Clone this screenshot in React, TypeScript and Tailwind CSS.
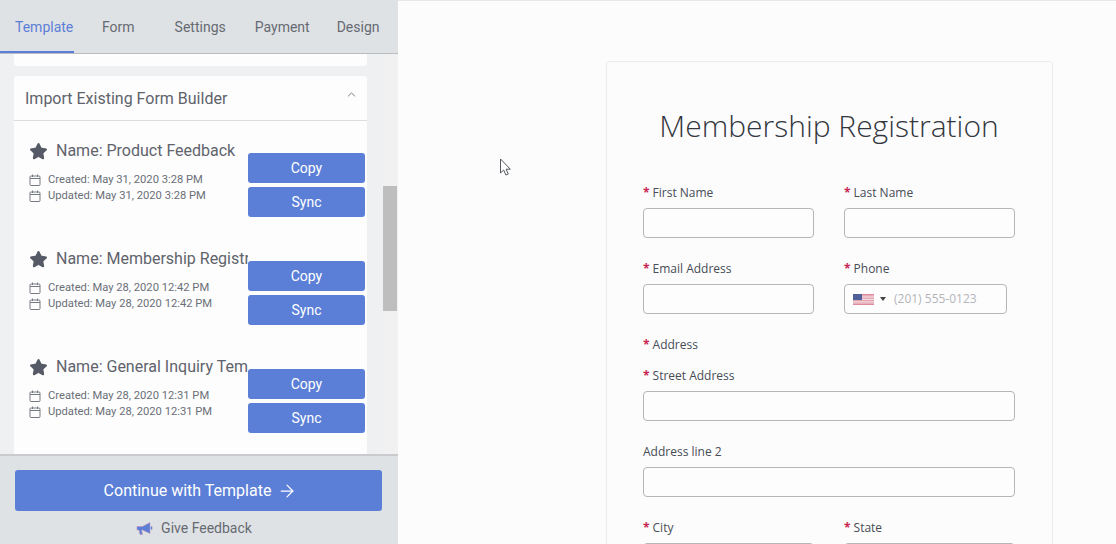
import { ArrowRight, ChevronUp, Star } from "lucide-react";

const templates = [
  { name: "Name: Product Feedback", created: "May 31, 2020 3:28 PM", updated: "May 31, 2020 3:28 PM" },
  { name: "Name: Membership Registration", created: "May 28, 2020 12:42 PM", updated: "May 28, 2020 12:42 PM" },
  { name: "Name: General Inquiry Template", created: "May 28, 2020 12:31 PM", updated: "May 28, 2020 12:31 PM" },
];

const Calendar = () => (
  <svg width="12" height="12" viewBox="0 0 12 12" fill="none" stroke="#777b83" strokeWidth="1" className="shrink-0">
    <rect x="1" y="2" width="10" height="9.5" rx="1" />
    <path d="M1 4.5h10M3.5 0.5v2.5M8.5 0.5v2.5" />
  </svg>
);

const TemplateRow = ({ name, created, updated }: { name: string; created: string; updated: string }) => (
  <div className="flex h-[108px]">
    <div className="w-[234px] pl-[15px] pt-[20px] shrink-0">
      <div className="flex items-center h-[20px] overflow-hidden">
        <Star className="w-[19px] h-[19px] shrink-0 fill-[#555a66] text-[#555a66]" strokeWidth={1.5} />
        <span className="ml-[8px] text-[16px] text-[#5f636c] whitespace-nowrap">{name}</span>
      </div>
      <div className="mt-[11px] flex items-center gap-[7px] h-[16px] text-[11.2px] text-[#6b6f78]">
        <Calendar />
        <span>Created: {created}</span>
      </div>
      <div className="flex items-center gap-[7px] h-[16px] text-[11.2px] text-[#6b6f78]">
        <Calendar />
        <span>Updated: {updated}</span>
      </div>
    </div>
    <div className="pt-[32px] flex flex-col gap-[4px]">
      <button className="w-[117px] h-[30px] rounded-[3px] bg-[#5b7fd7] text-white text-[14px]">Copy</button>
      <button className="w-[117px] h-[30px] rounded-[3px] bg-[#5b7fd7] text-white text-[14px]">Sync</button>
    </div>
  </div>
);

const Label = ({ text, required = true }: { text: string; required?: boolean }) => (
  <div className="h-[20px] text-[12px] leading-[21px] text-[#474c55]">
    {required && <span className="text-[#c8264f] font-bold mr-[3px]">*</span>}
    {text}
  </div>
);

const Input = () => (
  <div className="w-full h-[30px] mt-[6px] border border-[#b5b6ba] rounded-[4px] bg-[#fdfdfe]" />
);

const Flag = () => (
  <svg width="21" height="11" viewBox="0 0 21 11" className="shrink-0">
    <rect width="21" height="11" fill="#e08e9e" />
    <rect y="1.7" width="21" height="0.9" fill="#f4e9ec" />
    <rect y="3.4" width="21" height="0.9" fill="#f4e9ec" />
    <rect y="5.1" width="21" height="0.9" fill="#f4e9ec" />
    <rect y="6.8" width="21" height="0.9" fill="#f4e9ec" />
    <rect y="8.5" width="21" height="0.9" fill="#f4e9ec" />
    <rect width="9" height="6" fill="#4f5f98" />
  </svg>
);

export default function App() {
  return (
    <div className="relative flex w-[1116px] h-[544px] overflow-hidden bg-[#fcfcfd] font-['Roboto',sans-serif]">
      <aside className="flex flex-col w-[398px] h-full shrink-0 bg-[#eff0f1]">
        <nav className="flex h-[54px] shrink-0 bg-[#dfe2e5] border-b border-[#b9bcc0] text-[14px] leading-[54px] text-[#666a72]">
          <div className="w-[74px] h-[53px] pl-[15px] text-[#5b7fd7] border-b-2 border-[#5b7fd7]">Template</div>
          <div className="ml-[28px]">Form</div>
          <div className="ml-[40px]">Settings</div>
          <div className="ml-[29px]">Payment</div>
          <div className="ml-[27px]">Design</div>
        </nav>

        <div className="flex flex-1 min-h-0">
          <div className="w-[383px] pl-[14px] pr-[16px] overflow-hidden">
            <div className="h-[12px] bg-[#fdfdfd] rounded-b-[3px]" />
            <div className="mt-[10px] h-[400px] bg-[#fdfdfd] rounded-t-[3px]">
              <div className="flex justify-between h-[45px] pl-[11px] pr-[9px] pt-[12px] border-b border-[#dcdddf]">
                <span className="text-[16px] leading-[21px] text-[#5f636c]">Import Existing Form Builder</span>
                <ChevronUp className="w-[13px] h-[13px] text-[#5f636c]" strokeWidth={1.5} />
              </div>
              {templates.map((t) => (
                <TemplateRow key={t.created} name={t.name} created={t.created} updated={t.updated} />
              ))}
            </div>
          </div>
          <div className="w-[15px] pt-[132px] pr-[1px] bg-[#f1f1f1]">
            <div className="h-[125px] bg-[#bebebe]" />
          </div>
        </div>

        <div className="h-[90px] shrink-0 px-[15px] pt-[14px] bg-[#dfe2e5] border-t-2 border-[#c9cbce]">
          <button className="flex items-center justify-center gap-[6px] w-[367px] h-[41px] pl-[4px] rounded-[3px] bg-[#5b7fd7] text-white text-[16px]">
            Continue with Template
            <ArrowRight className="w-[20px] h-[20px]" strokeWidth={1.5} />
          </button>
          <div className="flex items-center justify-center gap-[8px] mt-[7px] pr-[10px] text-[14px] text-[#666a72]">
            <svg width="17" height="15" viewBox="0 0 17 15">
              <path d="M1 5.5h5.5L14 1.5v11L6.5 9H5.5l1 4.5H4L3 9H1z" fill="#5b7fd7" stroke="#c78bb0" strokeWidth="0.5" />
              <path d="M15.5 5.5v3" stroke="#5b7fd7" strokeWidth="1.5" />
            </svg>
            Give Feedback
          </div>
        </div>
      </aside>

      <main className="flex-1 min-w-0 border-t border-[#e8e8ea]">
        <section className="ml-[208px] mt-[60px] w-[447px] h-[600px] border border-[#ececee] rounded-[3px] pl-[36px] pr-[37px] pt-[44px] font-['Open_Sans',sans-serif]">
          <h1 className="text-center text-[30px] leading-[40px] text-[#33373d] font-light">Membership Registration</h1>
          <div className="grid grid-cols-[171px_171px] gap-x-[30px] mt-[36px]">
            <div>
              <Label text="First Name" />
              <Input />
            </div>
            <div>
              <Label text="Last Name" />
              <Input />
            </div>
            <div className="mt-[20px]">
              <Label text="Email Address" />
              <Input />
            </div>
            <div className="mt-[20px]">
              <Label text="Phone" />
              <div className="flex items-center h-[30px] w-[163px] mt-[6px] pl-[8px] border border-[#b5b6ba] rounded-[4px] bg-[#fdfdfe]">
                <Flag />
                <span className="ml-[6px] w-0 h-0 border-x-[3px] border-x-transparent border-t-[4px] border-t-[#444]" />
                <span className="ml-[8px] text-[12px] text-[#b4b5b9]">(201) 555-0123</span>
              </div>
            </div>
          </div>
          <div className="mt-[20px]">
            <Label text="Address" />
          </div>
          <div className="mt-[11px]">
            <Label text="Street Address" />
            <Input />
          </div>
          <div className="mt-[20px]">
            <Label text="Address line 2" required={false} />
            <Input />
          </div>
          <div className="grid grid-cols-[171px_171px] gap-x-[30px] mt-[20px]">
            <div>
              <Label text="City" />
              <Input />
            </div>
            <div>
              <Label text="State" />
              <Input />
            </div>
          </div>
        </section>
      </main>

      {/* mouse cursor caught in the capture */}
      <svg className="absolute left-[499px] top-[158px]" width="14" height="20" viewBox="0 0 14 20">
        <path d="M1.5 1v14l3.2-3 2.2 5 2.4-1-2.2-4.8h4.2z" fill="#fff" stroke="#55585e" strokeWidth="1" />
      </svg>
    </div>
  );
}
